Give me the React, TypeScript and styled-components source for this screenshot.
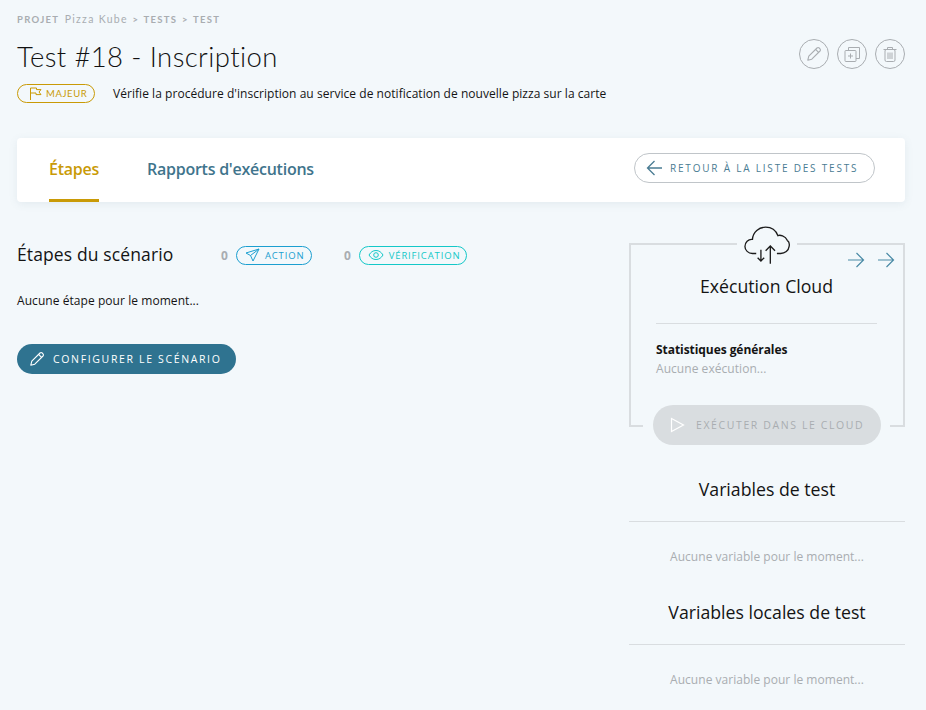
import React from 'react';
import styled, { createGlobalStyle } from 'styled-components';

const GlobalStyle = createGlobalStyle`
  html, body { margin: 0; padding: 0; background: #f3f8fb; }
  body { font-family: 'Open Sans', 'Noto Sans', sans-serif; color: #141414; }
`;

const Page = styled.div`
  width: 926px;
  height: 710px;
  box-sizing: border-box;
  padding: 13px 21px 0 17px;
  overflow: hidden;
`;

const Breadcrumb = styled.div`
  font-family: Lato, sans-serif;
  font-size: 9.5px;
  line-height: 13px;
  font-weight: 700;
  letter-spacing: 1.3px;
  color: #a9adb1;
  word-spacing: 1px;
  span { font-size: 10.5px; font-weight: 400; margin: 0 0 0 1px; letter-spacing: 1.3px; word-spacing: 0; }
`;

const Header = styled.header`
  display: flex;
  justify-content: space-between;
  align-items: flex-start;
  margin-top: 12px;
`;

const Title = styled.h1`
  margin: 0;
  font-family: Lato, sans-serif;
  font-size: 27.5px;
  line-height: 38px;
  font-weight: 300;
  color: #111;
  letter-spacing: 0.4px;
`;

const IconRow = styled.div`
  display: flex;
  gap: 8px;
  margin-top: 1px;
`;

const RoundIcon = styled.button`
  width: 30px;
  height: 30px;
  padding: 0;
  border: 1px solid #a9adb1;
  border-radius: 50%;
  background: transparent;
  color: #a9adb1;
  display: flex;
  align-items: center;
  justify-content: center;
`;

const Meta = styled.div`
  display: flex;
  align-items: center;
  margin-top: 7px;
  height: 20px;
`;

const Pill = styled.span<{ $color: string }>`
  display: inline-flex;
  align-items: center;
  box-sizing: border-box;
  height: 19px;
  border: 1px solid ${({ $color }) => $color};
  border-radius: 10px;
  color: ${({ $color }) => $color};
  font-size: 9.5px;
  letter-spacing: 0.9px;
`;

const Severity = styled(Pill)`
  width: 78px;
  padding-left: 10px;
  gap: 4px;
  font-family: Lato, sans-serif;
  letter-spacing: 0.6px;
`;

const Description = styled.p`
  margin: 0 0 0 18px;
  font-size: 12px;
  letter-spacing: 0.045px;
  color: #141414;
`;

const TabsCard = styled.nav`
  display: flex;
  align-items: stretch;
  justify-content: space-between;
  height: 64px;
  margin-top: 35px;
  padding: 0 30px 0 32px;
  background: #fff;
  border-radius: 4px;
  box-shadow: 0 2px 8px rgba(90, 120, 140, 0.1);
`;

const Tabs = styled.div`
  display: flex;
  gap: 48px;
`;

const Tab = styled.div<{ $active?: boolean }>`
  display: flex;
  align-items: center;
  font-size: 16px;
  font-weight: 600;
  letter-spacing: -0.25px;
  color: ${({ $active }) => ($active ? '#c99a06' : '#40748c')};
  border-bottom: 3px solid ${({ $active }) => ($active ? '#c99a06' : 'transparent')};
  box-sizing: border-box;
  padding-top: 1px;
`;

const BackButton = styled.button`
  align-self: center;
  display: flex;
  align-items: center;
  gap: 7px;
  height: 30px;
  width: 241px;
  box-sizing: border-box;
  padding: 0 0 0 11px;
  margin-top: -4px;
  background: #fff;
  border: 1px solid #c0c5c9;
  border-radius: 15px;
  color: #4a7c93;
  font-family: 'Open Sans', sans-serif;
  font-size: 10px;
  letter-spacing: 1.8px;
  white-space: nowrap;
`;

const Columns = styled.div`
  display: flex;
  justify-content: space-between;
  align-items: flex-start;
`;

const Steps = styled.section`
  padding-top: 40px;
`;

const StepsHead = styled.div`
  display: flex;
  align-items: center;
  height: 26px;
`;

const StepsTitle = styled.h2`
  margin: -2px 0 0;
  width: 204px;
  font-size: 17.5px;
  font-weight: 400;
  color: #141414;
  letter-spacing: 0.12px;
`;

const Count = styled.span`
  font-size: 12px;
  font-weight: 700;
  color: #a9adb1;
  margin-right: 8px;
`;

const StepPill = styled(Pill)<{ $width: number; $gapAfter?: number }>`
  width: ${({ $width }) => $width}px;
  margin-right: ${({ $gapAfter }) => $gapAfter ?? 0}px;
  padding-left: 8px;
  gap: 5px;
  letter-spacing: 0.85px;
  white-space: nowrap;
`;

const Empty = styled.p`
  margin: 25px 0 0;
  font-size: 12px;
  line-height: 16px;
  letter-spacing: 0.06px;
  color: #141414;
`;

const PrimaryButton = styled.button`
  display: flex;
  align-items: center;
  gap: 8px;
  width: 219px;
  height: 30px;
  margin-top: 35px;
  padding: 0 0 0 12px;
  box-sizing: border-box;
  background: #2f7390;
  border: 0;
  border-radius: 15px;
  color: #fff;
  font-family: 'Open Sans', sans-serif;
  font-size: 10.5px;
  font-weight: 500;
  letter-spacing: 1.65px;
  white-space: nowrap;
`;

const Side = styled.aside`
  width: 276px;
  margin-top: 41px;
`;

const CloudFrame = styled.div`
  position: relative;
  box-sizing: border-box;
  height: 184px;
  border: 2px solid #d9dde0;
  padding: 0 26px 0 25px;
`;

const CloudIcon = styled.div`
  position: absolute;
  top: -19px;
  left: 106px;
  width: 60px;
  height: 40px;
  display: flex;
  justify-content: center;
  background: #f3f8fb;
`;

const Arrows = styled.div`
  position: absolute;
  top: 7px;
  right: 8px;
  display: flex;
  gap: 12px;
  color: #4a8aa5;
`;

const CloudTitle = styled.h3`
  margin: 28px 0 0;
  text-align: center;
  font-size: 17.7px;
  line-height: 26px;
  font-weight: 400;
  color: #141414;
`;

const Divider = styled.hr`
  border: 0;
  border-top: 1px solid #d9dde0;
  margin: 24px 0 0;
`;

const StatsTitle = styled.div`
  margin-top: 18px;
  font-size: 12px;
  line-height: 16px;
  font-weight: 700;
  letter-spacing: -0.06px;
  color: #141414;
`;

const StatsEmpty = styled.div`
  font-size: 12px;
  line-height: 16px;
  margin-top: 3px;
  letter-spacing: 0.05px;
  color: #a9adb1;
`;

const RunWrap = styled.div`
  position: absolute;
  left: 12px;
  bottom: -20px;
  padding: 0 9px 0 10px;
  background: #f3f8fb;
`;

const RunButton = styled.button`
  display: flex;
  align-items: center;
  gap: 11px;
  width: 228px;
  height: 40px;
  box-sizing: border-box;
  padding: 0 0 0 17px;
  border: 0;
  border-radius: 20px;
  background: #d9dde0;
  color: #a9adb1;
  font-family: 'Open Sans', sans-serif;
  font-size: 10.5px;
  letter-spacing: 1.6px;
  white-space: nowrap;
`;

const VarBlock = styled.section<{ $top: number }>`
  margin-top: ${({ $top }) => $top}px;
`;

const VarTitle = styled.h3`
  margin: 0;
  text-align: center;
  font-size: 17.7px;
  line-height: 26px;
  font-weight: 400;
  color: #141414;
  padding-bottom: 19px;
  border-bottom: 1px solid #d9dde0;
`;

const VarEmpty = styled.p`
  margin: 27px 0 0;
  text-align: center;
  font-size: 12px;
  line-height: 16px;
  letter-spacing: 0.03px;
  color: #a9adb1;
`;

const Pencil = ({ size = 16 }: { size?: number }) => (
  <svg width={size} height={size} viewBox="0 0 16 16" fill="none" stroke="currentColor" strokeWidth="1.1" strokeLinejoin="round">
    <path d="M1.8 14.2l1-4L11 2a1.6 1.6 0 0 1 2.2 0l.8.8a1.6 1.6 0 0 1 0 2.2l-8.2 8.2z" />
    <path d="M9.6 3.4l3 3" />
  </svg>
);

const Duplicate = () => (
  <svg width="17" height="17" viewBox="0 0 17 17" fill="none" stroke="currentColor" strokeWidth="1">
    <rect x="1" y="4.5" width="11" height="11" rx="0.8" />
    <path d="M4.5 4.5V1.500h11v11h-3.500" />
    <path d="M6.500 7.500v5M4 10h5" />
  </svg>
);

const Trash = () => (
  <svg width="16" height="17" viewBox="0 0 16 17" fill="none" stroke="currentColor" strokeWidth="1">
    <path d="M1.500 3.500h13M5.500 3.500V1.500h5v2" />
    <rect x="3" y="3.500" width="10" height="12" rx="1.500" />
    <path d="M6 6.500v6.500M8 6.500v6.500M10 6.500v6.500" />
  </svg>
);

const Flag = () => (
  <svg width="14" height="13" viewBox="0 0 14 13" fill="none" stroke="currentColor" strokeWidth="1">
    <path d="M2.500 13V1h6v1.600h4.500L11 5l2 2.600H8V6H2.500" />
  </svg>
);

const ArrowLeft = () => (
  <svg width="17" height="16" viewBox="0 0 17 16" fill="none" stroke="currentColor" strokeWidth="1.300">
    <path d="M16 8H1.500M8.500 1L1.500 8l7 7" />
  </svg>
);

const ArrowRight = () => (
  <svg width="18" height="16" viewBox="0 0 18 16" fill="none" stroke="currentColor" strokeWidth="1.200">
    <path d="M1 8h15M9.500 1l7 7-7 7" />
  </svg>
);

const Send = () => (
  <svg width="15" height="14" viewBox="0 0 15 14" fill="none" stroke="currentColor" strokeWidth="1">
    <path d="M14 1L1 5l4.500 2.500L8 13z" />
    <path d="M14 1L5.500 7.500" />
  </svg>
);

const Eye = () => (
  <svg width="16" height="12" viewBox="0 0 16 12" fill="none" stroke="currentColor" strokeWidth="1">
    <path d="M1 6c1.800-3 4-4.500 7-4.500S13.200 3 15 6c-1.800 3-4 4.500-7 4.500S2.800 9 1 6z" />
    <circle cx="8" cy="6" r="2.300" />
  </svg>
);

const Cloud = () => (
  <svg width="47" height="39" viewBox="0 0 50 41" fill="none" stroke="#1c1c1c" strokeWidth="1.400">
    <path d="M13 29H9C4.500 29 1 25.500 1 21.500C1 17 4.500 13.500 9 14C9.500 6 16 1 23 1C29 1 34 4.500 36 10C38 9 44 10 46 15C48.500 16.500 48.500 19 48 21.500C47.500 26 43.500 29 39 29H35" />
    <path d="M18 25v12M14.500 33.500L18 37l3.500-3.500" />
    <path d="M28 40V21M23 26l5-5 5 5" />
  </svg>
);

const Play = () => (
  <svg width="15" height="16" viewBox="0 0 15 16" fill="none" stroke="#fff" strokeWidth="1.200">
    <path d="M1.500 1.500v13L13.500 8z" />
  </svg>
);

export default function App() {
  return (
    <Page>
      <GlobalStyle />
      <Breadcrumb>
        PROJET <span>Pizza Kube</span> &gt; TESTS &gt; TEST
      </Breadcrumb>
      <Header>
        <Title>Test #18 - Inscription</Title>
        <IconRow>
          <RoundIcon aria-label="Modifier"><Pencil /></RoundIcon>
          <RoundIcon aria-label="Dupliquer"><Duplicate /></RoundIcon>
          <RoundIcon aria-label="Supprimer"><Trash /></RoundIcon>
        </IconRow>
      </Header>
      <Meta>
        <Severity $color="#c99a06"><Flag />MAJEUR</Severity>
        <Description>Vérifie la procédure d'inscription au service de notification de nouvelle pizza sur la carte</Description>
      </Meta>

      <TabsCard>
        <Tabs>
          <Tab $active>Étapes</Tab>
          <Tab>Rapports d'exécutions</Tab>
        </Tabs>
        <BackButton><ArrowLeft />RETOUR À LA LISTE DES TESTS</BackButton>
      </TabsCard>

      <Columns>
        <Steps>
          <StepsHead>
            <StepsTitle>Étapes du scénario</StepsTitle>
            <Count>0</Count>
            <StepPill $color="#1b9fd0" $width={76} $gapAfter={32}><Send />ACTION</StepPill>
            <Count>0</Count>
            <StepPill $color="#14c8c8" $width={108}><Eye />VÉRIFICATION</StepPill>
          </StepsHead>
          <Empty>Aucune étape pour le moment...</Empty>
          <PrimaryButton><Pencil />CONFIGURER LE SCÉNARIO</PrimaryButton>
        </Steps>

        <Side>
          <CloudFrame>
            <CloudIcon><Cloud /></CloudIcon>
            <Arrows><ArrowRight /><ArrowRight /></Arrows>
            <CloudTitle>Exécution Cloud</CloudTitle>
            <Divider />
            <StatsTitle>Statistiques générales</StatsTitle>
            <StatsEmpty>Aucune exécution...</StatsEmpty>
            <RunWrap>
              <RunButton><Play />EXÉCUTER DANS LE CLOUD</RunButton>
            </RunWrap>
          </CloudFrame>
          <VarBlock $top={49}>
            <VarTitle>Variables de test</VarTitle>
            <VarEmpty>Aucune variable pour le moment...</VarEmpty>
          </VarBlock>
          <VarBlock $top={34}>
            <VarTitle>Variables locales de test</VarTitle>
            <VarEmpty>Aucune variable pour le moment...</VarEmpty>
          </VarBlock>
        </Side>
      </Columns>
    </Page>
  );
}
